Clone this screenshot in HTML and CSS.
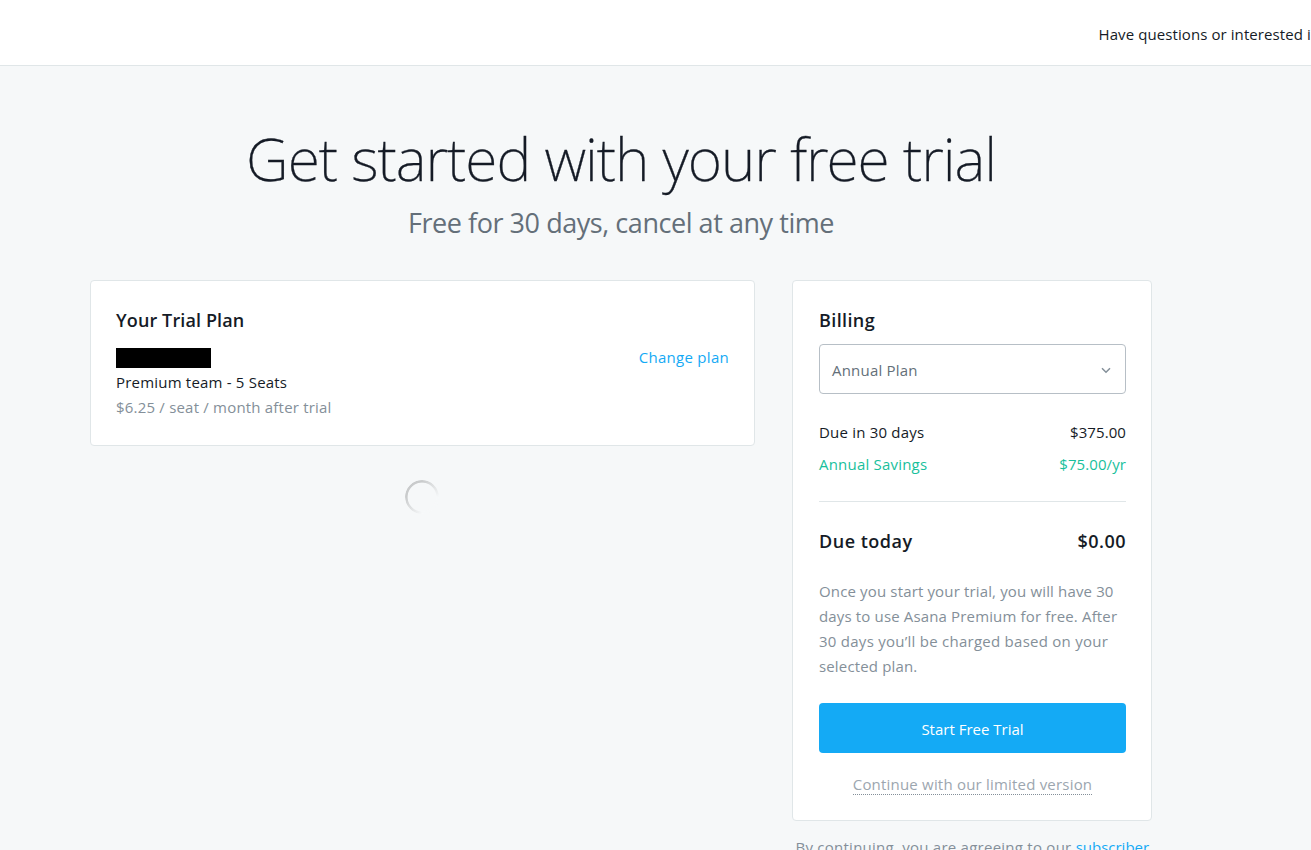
FILE: index.html
```html
<!DOCTYPE html>
<html lang="en">
<head>
<meta charset="utf-8">
<title>Free trial</title>
<link rel="stylesheet" href="styles.css">
</head>
<body>
<header class="topbar"><span>Have questions or interested in</span></header>
<main class="page">
  <section class="hero">
    <h1 class="hero-title">Get started with your free trial</h1>
    <p class="hero-subtitle">Free for 30 days, cancel at any time</p>
  </section>
  <div class="columns">
    <div class="main-column">
      <section class="card plan">
        <h2 class="card-title">Your Trial Plan</h2>
        <div class="plan-row">
          <div class="plan-details">
            <div class="plan-name"></div>
            <div class="plan-seats">Premium team - 5 Seats</div>
            <div class="plan-price">$6.25 / seat / month after trial</div>
          </div>
          <a class="link">Change plan</a>
        </div>
      </section>
      <div class="spinner"></div>
    </div>
    <aside class="side-column">
      <section class="card billing">
        <h2 class="card-title">Billing</h2>
        <div class="select"><span>Annual Plan</span>
          <svg class="chevron" width="10" height="7" viewBox="0 0 10 7"><path d="M1 1.2 5 5.2 9 1.2"/></svg>
        </div>
        <div class="line-item"><span>Due in 30 days</span><span class="amount">$375.00</span></div>
        <div class="line-item savings"><span>Annual Savings</span><span class="amount">$75.00/yr</span></div>
        <div class="divider"></div>
        <div class="total"><span>Due today</span><span>$0.00</span></div>
        <p class="note">Once you start your trial, you will have 30<br>days to use Asana Premium for free. After<br><span class="note-wide">30 days you’ll be charged based on your</span><br>selected plan.</p>
        <a class="button">Start Free Trial</a>
        <div class="skip"><a class="skip-link">Continue with our limited version</a></div>
      </section>
      <p class="terms">By continuing, you are agreeing to our <a class="terms-link">subscriber</a></p>
    </aside>
  </div>
</main>
</body>
</html>
```
FILE: styles.css
```css
* { box-sizing: border-box; }
body {
  margin: 0;
  height: 850px;
  overflow: hidden;
  background: #f6f8f9;
  color: #151b26;
  font: 15px/25px "Open Sans", "Noto Sans", sans-serif;
  letter-spacing: 0.2px;
}
h1, h2, p { margin: 0; font-weight: 400; }
.topbar {
  height: 66px;
  padding: 22px 0 0 1098.5px;
  background: #fff;
  border-bottom: 1px solid #e0e6e8;
  letter-spacing: 0.09px;
  white-space: nowrap;
  overflow: hidden;
}
.page { width: 1062px; margin-left: 90px; padding-top: 52px; }
.hero { text-align: center; white-space: nowrap; }
.hero-title {
  font-family: "Noto Sans", "Open Sans", sans-serif;
  font-size: 59px;
  line-height: 80px;
  font-weight: 250;
  letter-spacing: -1.06px;
  -webkit-text-stroke: 0.3px #151b26;
}
.hero-subtitle { margin-top: 5px; font-size: 27px; line-height: 40px; letter-spacing: -0.45px; color: #646f79; }
.columns { display: flex; justify-content: space-between; margin-top: 37px; }
.main-column { width: 665px; }
.side-column { width: 360px; }
.card {
  background: #fff;
  border: 1px solid #e0e6e8;
  border-radius: 4px;
  padding: 25px;
  white-space: nowrap;
}
.card-title { font-size: 18px; line-height: 28px; font-weight: 600; letter-spacing: 0.12px; }
.plan { height: 166px; }
.plan-row { display: flex; justify-content: space-between; margin-top: 11px; }
.plan-name { width: 95px; height: 20px; margin: 3px 0 2px; background: #000; }
.plan-price, .note { color: #848f99; }
.link { color: #14aaf5; letter-spacing: 0.28px; }
.spinner {
  position: relative;
  left: -1px;
  width: 34px;
  height: 34px;
  margin: 34px auto 0;
  border-radius: 50%;
  background: conic-gradient(from 0deg, #c9cbcc 0deg, #f6f8f9 90deg 180deg, #c9cbcc 270deg);
  mask: radial-gradient(circle, transparent 14px, #000 14.8px);
}
.billing { height: 541px; padding: 25px 25px 0 26px; }
.billing .card-title { letter-spacing: 0.38px; }
.select {
  height: 50px;
  margin-top: 10px;
  padding: 2px 14px 0 12px;
  display: flex;
  align-items: center;
  justify-content: space-between;
  border: 1px solid #b7bfc6;
  border-radius: 4px;
  color: #646f79;
}
.chevron path { fill: none; stroke: #848f99; stroke-width: 1.5; }
.line-item { display: flex; justify-content: space-between; line-height: 32px; }
.select + .line-item { margin-top: 22px; }
.amount { letter-spacing: 0.08px; }
.savings { color: #19bf9c; }
.divider { height: 1px; margin-top: 21px; background: #e0e6e8; }
.total {
  display: flex;
  justify-content: space-between;
  margin-top: 25px;
  font-size: 18px;
  line-height: 28px;
  font-weight: 600;
  letter-spacing: 0.5px;
}
.note { margin-top: 24px; letter-spacing: 0.15px; }
.note-wide { letter-spacing: 0.26px; }
.button {
  display: block;
  height: 50px;
  margin-top: 24px;
  border-radius: 4px;
  background: #14aaf5;
  color: #fff;
  line-height: 52px;
  letter-spacing: 0;
  text-align: center;
}
.skip { margin-top: 22px; text-align: center; line-height: 19px; }
.skip-link { display: inline-block; border-bottom: 1px dotted #848f99; color: #9ca6af; }
.terms { margin: 14px 0 0 3.5px; color: #848f99; letter-spacing: 0.25px; white-space: nowrap; }
.terms-link { color: #14aaf5; letter-spacing: 0; }
```
